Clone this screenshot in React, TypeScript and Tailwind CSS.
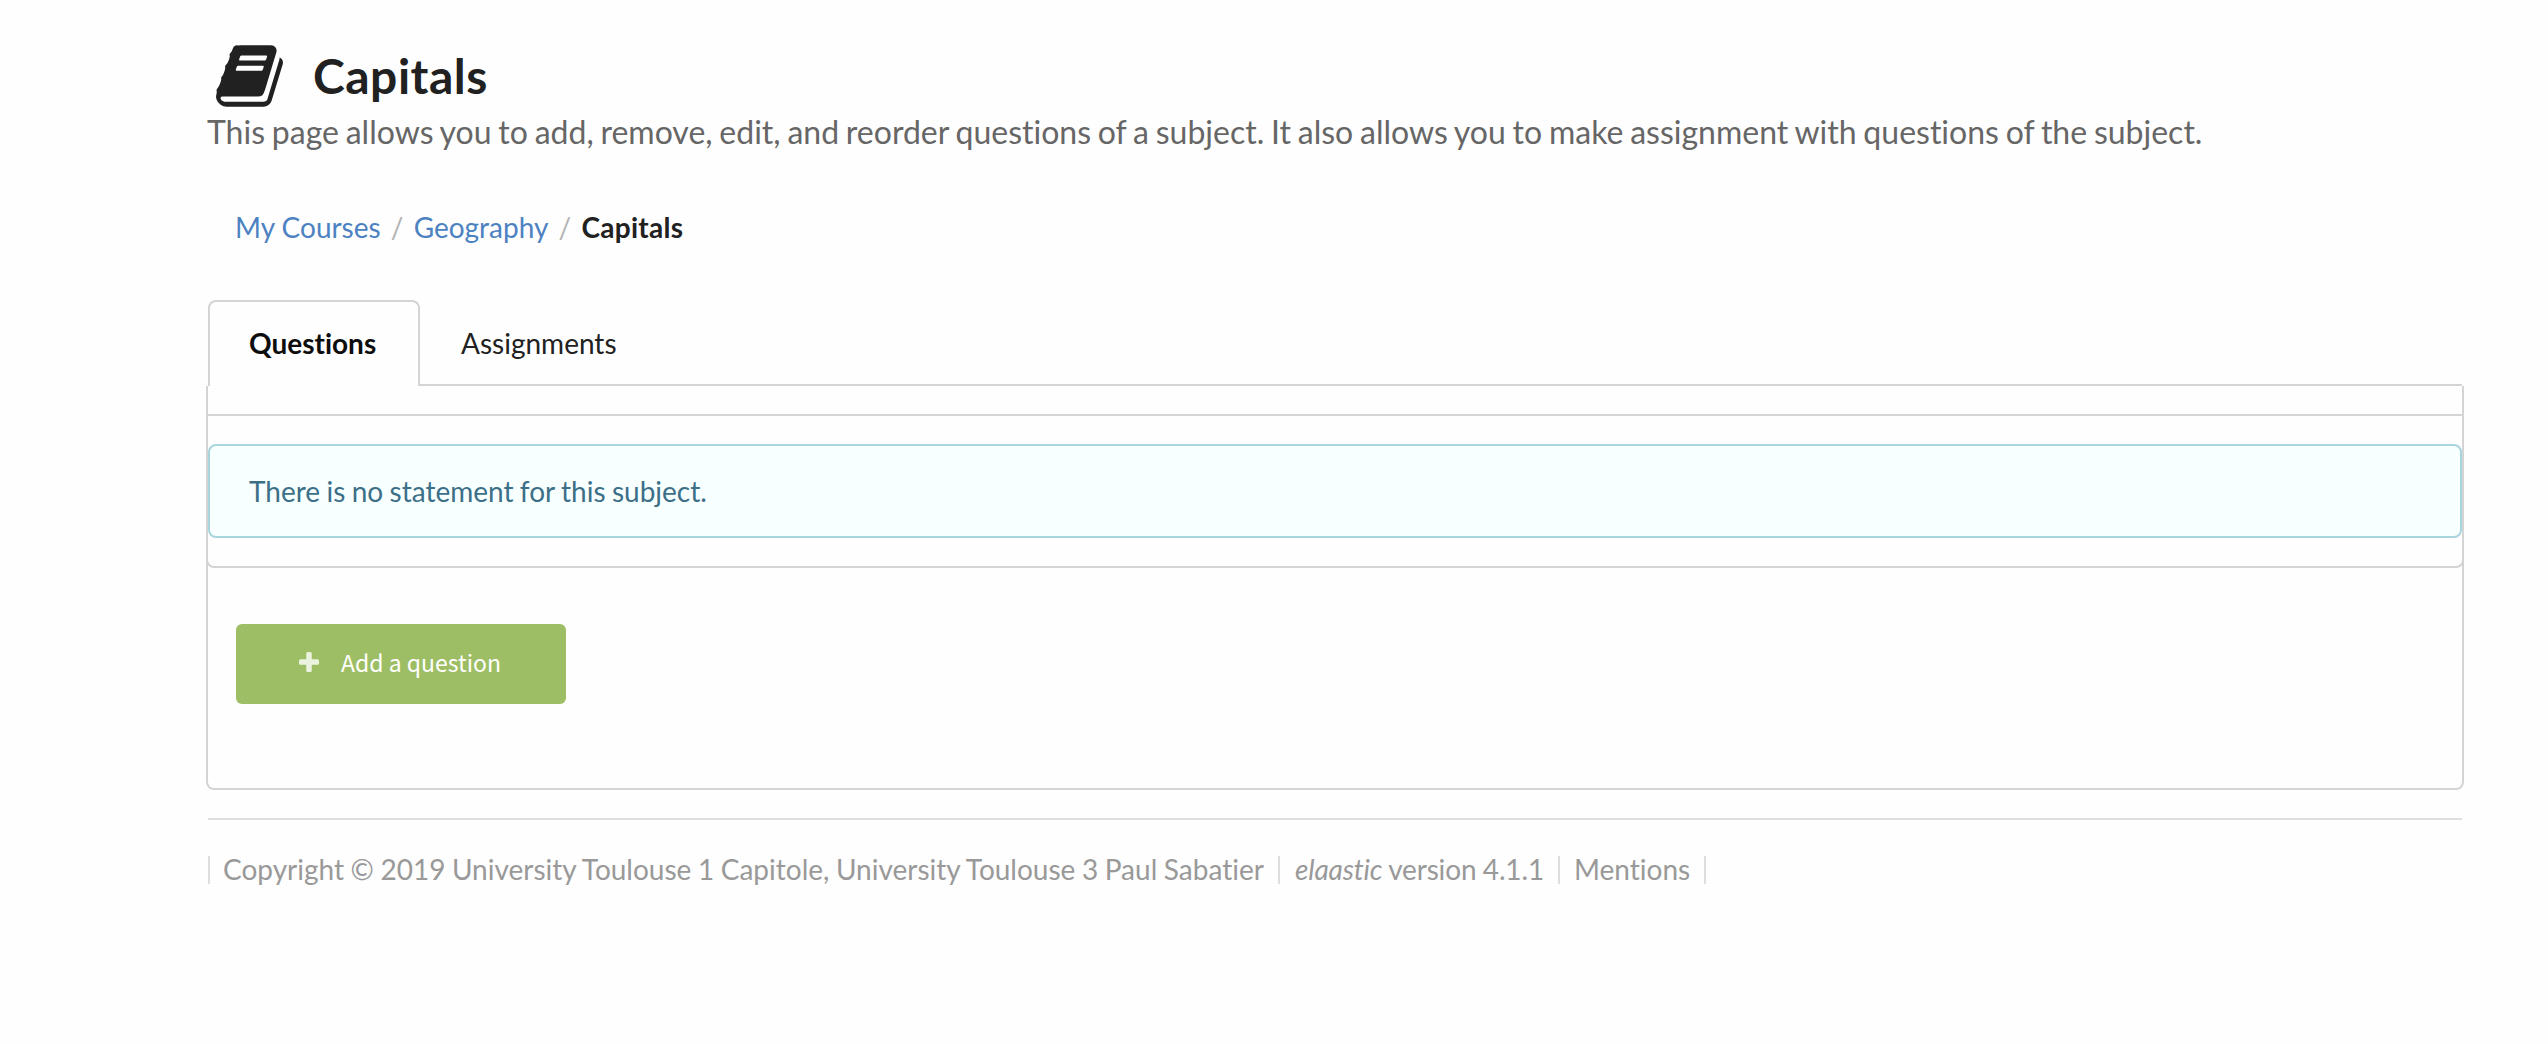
import React from "react";

function BookIcon() {
  return (
    <svg viewBox="0 0 1664 1792" className="h-[72px] w-[67px] shrink-0 fill-[#212121]" aria-hidden="true">
      <path d="M1639 478q40 57 18 129l-275 906q-19 64-76.5 107.5t-122.5 43.5h-923q-77 0-148.5-53.5t-99.5-131.5q-24-67-2-127 0-4 3-27t4-37q1-8-3-21.5t-3-19.5q2-11 8-21t16.5-23.5 16.5-23.5q23-38 45-91.5t30-91.5q3-10 .5-30t-.5-28q3-11 17-28t17-23q21-36 42-92t25-90q1-9-2.5-32t.5-28q4-13 22-30.5t22-22.5q19-26 42.5-84.5t27.5-96.5q1-8-3-25.5t-2-26.5q2-8 9-18t18-23 17-21q8-12 16.5-30.5t15-35 16-36 19.5-32 26.5-23.5 36-11.5 47.5 5.5l-1 3q38-9 51-9h761q74 0 114 56t18 130l-274 906q-36 119-71.5 153.5t-128.5 34.5h-869q-27 0-38 15-11 16-1 43 24 70 144 70h923q29 0 56-15.5t35-41.5l300-987q7-22 5-57 38 15 59 43zm-1064 2q-4 13 2 22.5t20 9.5h608q13 0 25.5-9.5t16.5-22.5l21-64q4-13-2-22.5t-20-9.5h-608q-13 0-25.5 9.5t-16.5 22.5zm-83 256q-4 13 2 22.5t20 9.5h608q13 0 25.5-9.5t16.5-22.5l21-64q4-13-2-22.5t-20-9.5h-608q-13 0-25.5 9.5t-16.5 22.5z" />
    </svg>
  );
}

function PlusIcon() {
  return (
    <svg viewBox="0 0 1408 1792" className="mb-[2px] h-[26px] w-[20px] shrink-0 fill-[#ebf2e0]" aria-hidden="true">
      <path d="M1408 736v192q0 40-28 68t-68 28h-416v416q0 40-28 68t-68 28h-192q-40 0-68-28t-28-68v-416h-416q-40 0-68-28t-28-68v-192q0-40 28-68t68-28h416v-416q0-40 28-68t68-28h192q40 0 68 28t28 68v416h416q40 0 68 28t28 68z" />
    </svg>
  );
}

function PageHeader() {
  return (
    <header>
      <div className="flex h-[72px] items-center pl-[8px]">
        <BookIcon />
        <h1 className="ml-[30px] text-[48px] leading-[62px] font-bold tracking-[0.5px] text-[#212121]">Capitals</h1>
      </div>
      <p className="-ml-px pt-px text-[32px] leading-[38px] whitespace-nowrap text-[#666] [word-spacing:-1.4px]">
        This page allows you to add, remove, edit, and reorder questions of a subject. It also allows you to make assignment with questions of the subject.
      </p>
    </header>
  );
}

function Separator() {
  return <span className="w-[33px] text-center text-[#b3b3b3]">/</span>;
}

function Breadcrumb() {
  return (
    <nav className="mt-[56px] ml-[27px] flex h-[40px] items-center text-[28px] leading-[40px]">
      <a className="text-[#4d82c2]">My Courses</a>
      <Separator />
      <a className="text-[#4d82c2]">Geography</a>
      <Separator />
      <span className="font-bold tracking-[0.3px] text-[#212121]">Capitals</span>
    </nav>
  );
}

function Tabs() {
  return (
    <div className="mt-[53px] flex h-[86px] text-[28px] leading-[28px]">
      <div className="flex w-[212px] items-center rounded-t-[8px] border-2 border-b-0 border-[#d4d4d5] pb-[2px] pl-[39px] font-bold text-[#0d0d0d]">
        Questions
      </div>
      <div className="flex flex-1 items-center border-b-2 border-[#d4d4d5] pt-[2px] pl-[41px] text-[#212121]">Assignments</div>
    </div>
  );
}

function QuestionsPanel() {
  return (
    <section className="-mx-[2px] h-[404px] rounded-b-[8px] border-2 border-t-0 border-[#d4d4d5] pt-[28px]">
      <div className="-mx-[2px] h-[154px] rounded-b-[8px] border-2 border-[#d4d4d5] pt-[28px]">
        <div className="flex h-[94px] items-center rounded-[8px] border-2 border-[#a9d5de] bg-[#f8ffff] pl-[39px] text-[28px] leading-[40px] text-[#3c6f88] [word-spacing:-0.8px]">
          There is no statement for this subject.
        </div>
      </div>
      <button className="mt-[56px] ml-[28px] flex h-[80px] w-[330px] items-center rounded-[6px] bg-[#9ebe65] pl-[63px] font-['Noto_Sans_CJK_SC',sans-serif] text-[23px] leading-[26px] text-white">
        <PlusIcon />
        <span className="ml-[22px] pb-[5px] whitespace-nowrap">Add a question</span>
      </button>
    </section>
  );
}

function Footer() {
  return (
    <footer className="mt-[28px] flex border-t-2 border-[#dededf] pt-[36px] text-[28px] leading-[26px] whitespace-nowrap text-[#999] [word-spacing:-0.6px]">
      <div className="h-[28px] w-[1070px] border-l-2 border-[#dededf] pl-[13px]">
        Copyright © 2019 University Toulouse 1 Capitole, University Toulouse 3 Paul Sabatier
      </div>
      <div className="h-[28px] w-[280px] border-l-2 border-[#dededf] pl-[15px] tracking-[-0.15px]">
        <em>elaastic</em> version 4.1.1
      </div>
      <div className="h-[28px] w-[148px] border-x-2 border-[#dededf] pl-[14px]">Mentions</div>
    </footer>
  );
}

export default function App() {
  return (
    <main className="min-h-[1044px] bg-[#fefefe] pt-[40px] pr-[86px] pl-[208px] font-['Lato',sans-serif] [font-variant-ligatures:none]">
      <PageHeader />
      <Breadcrumb />
      <Tabs />
      <QuestionsPanel />
      <Footer />
    </main>
  );
}
